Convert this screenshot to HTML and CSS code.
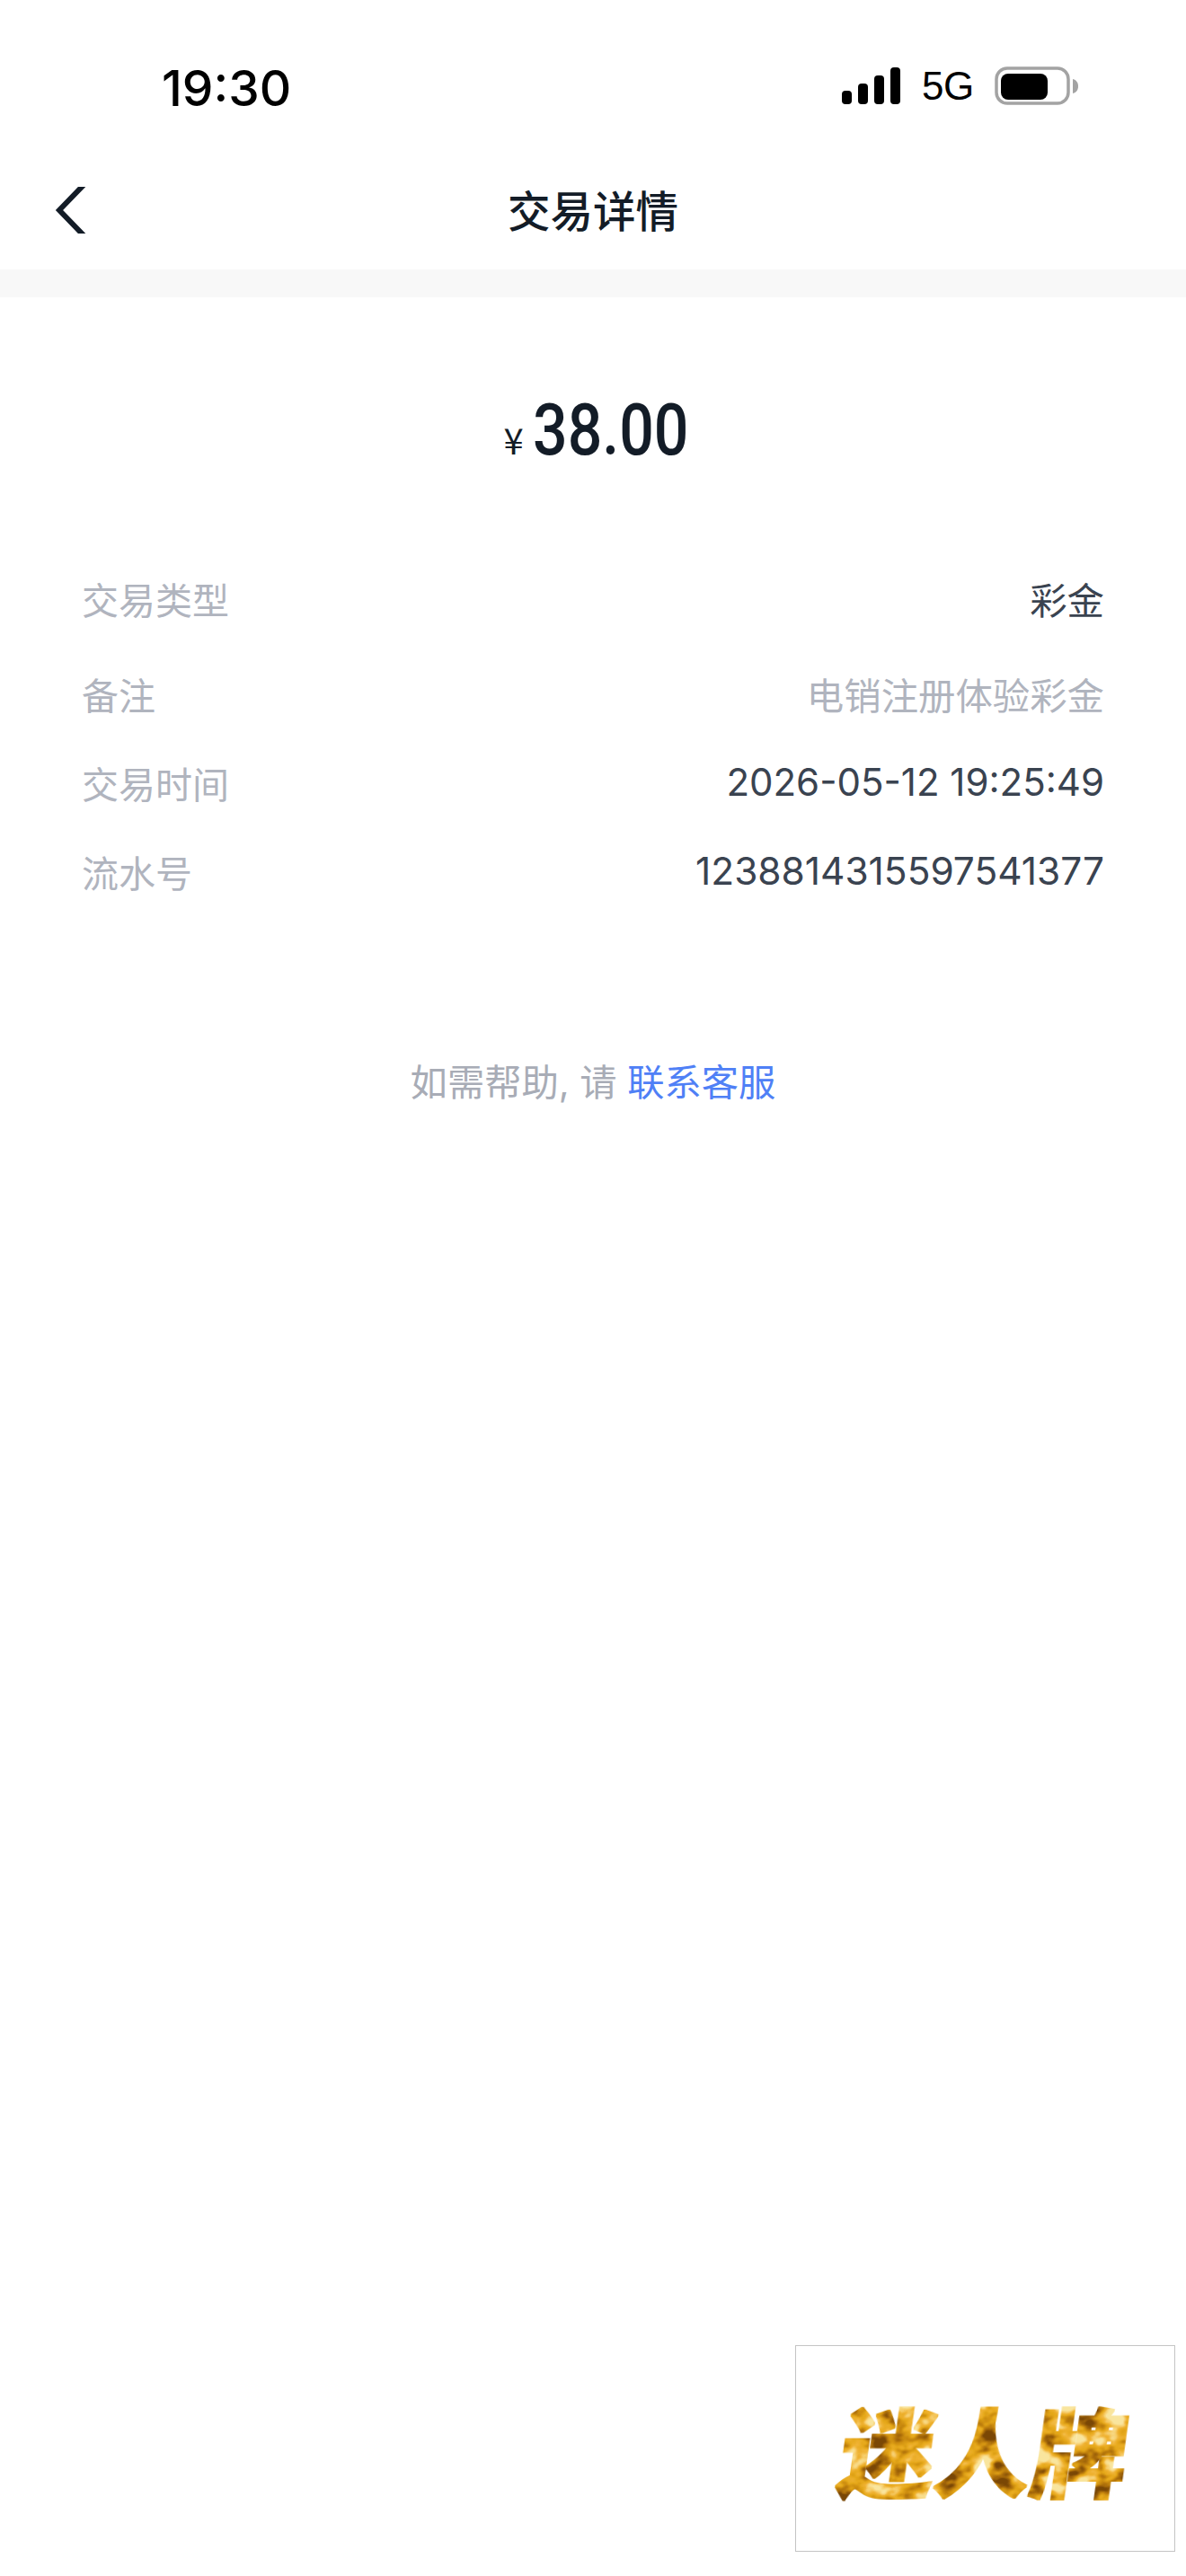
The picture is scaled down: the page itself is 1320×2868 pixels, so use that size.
FILE: index.html
```html
<!DOCTYPE html>
<html lang="zh-CN">
<head>
<meta charset="utf-8">
<title>交易详情</title>
<link rel="stylesheet" href="styles.css">
</head>
<body>
<div class="page">
  <header class="status">
    <span class="time">19:30</span>
    <div class="status-right">
      <svg class="signal" width="66" height="42" viewBox="0 0 66 42"><rect x="0" y="26" width="11" height="15" rx="4"/><rect x="18" y="18" width="11" height="23" rx="4"/><rect x="36" y="9" width="11" height="32" rx="4"/><rect x="54" y="0" width="11" height="41" rx="4"/></svg>
      <span class="net">5G</span>
      <svg class="battery" width="94" height="44" viewBox="0 0 94 44"><rect x="2" y="2" width="80" height="39" rx="12" fill="none" stroke="#a3a3a3" stroke-width="3.5"/><rect x="7" y="8" width="52" height="29" rx="8" fill="#000"/><path d="M87 14c4 1 6 4 6 8s-2 7-6 8z" fill="#a3a3a3"/></svg>
    </div>
  </header>
  <nav class="nav">
    <svg class="back" width="36" height="52" viewBox="0 0 36 52"><path d="M34-3 6 26l28 29" fill="none" stroke="#131c27" stroke-width="6"/></svg>
    <h1 class="title">交易详情</h1>
  </nav>
  <div class="band"></div>
  <main class="main">
    <div class="amount"><span class="yen">¥</span><span class="num">38.00</span></div>
    <dl class="rows">
      <div class="row r1"><dt>交易类型</dt><dd>彩金</dd></div>
      <div class="row r2"><dt>备注</dt><dd class="muted">电销注册体验彩金</dd></div>
      <div class="row r3"><dt>交易时间</dt><dd class="digits time-val">2026-05-12 19:25:49</dd></div>
      <div class="row r4"><dt>流水号</dt><dd class="digits">1238814315597541377</dd></div>
    </dl>
    <p class="help">如需帮助, 请 <a class="link">联系客服</a></p>
  </main>
  <div class="logo"><span class="logo-text">迷人牌</span></div>
  <svg class="defs" width="0" height="0" aria-hidden="true">
    <filter id="gold" x="-5%" y="-5%" width="110%" height="110%" color-interpolation-filters="sRGB">
      <feMorphology in="SourceAlpha" operator="dilate" radius="1.2" result="fat"/>
      <feTurbulence type="fractalNoise" baseFrequency="0.035 0.05" numOctaves="3" seed="7"/>
      <feColorMatrix type="matrix" values="0 0 0 0 0  0 0 0 0 0  0 0 0 0 0  1.6 1.6 0 0 -1.1"/>
      <feColorMatrix type="matrix" values="0 0 0 1 0  0 0 0 1 0  0 0 0 1 0  0 0 0 0 1"/>
      <feComponentTransfer>
        <feFuncR type="table" tableValues="0.48 0.66 0.80 0.90 0.94 0.97 0.98"/>
        <feFuncG type="table" tableValues="0.28 0.42 0.55 0.66 0.70 0.82 0.90"/>
        <feFuncB type="table" tableValues="0.02 0.04 0.06 0.10 0.20 0.45 0.62"/>
      </feComponentTransfer>
      <feComposite in2="fat" operator="in"/>
    </filter>
  </svg>
</div>
</body>
</html>
```
FILE: styles.css
```css
* { box-sizing: border-box; }
html, body { margin: 0; padding: 0; background: #fff; }
.page {
  position: relative;
  width: 1320px;
  height: 2868px;
  overflow: hidden;
  font-family: Inter, "Noto Sans CJK SC", sans-serif;
}
.defs { position: absolute; }
.status {
  height: 172px;
  padding: 66px 0 0 180px;
  display: flex;
  justify-content: space-between;
  align-items: flex-start;
}
.time {
  font: 500 55px/64px Inter, sans-serif;
  color: #000;
}
.status-right {
  display: flex;
  align-items: center;
  width: 383px;
  padding: 8px 0 0 0;
}
.net {
  font: 400 44px/44px "Liberation Sans", sans-serif;
  margin-left: 23px;
  width: 56px;
  letter-spacing: -.5px;
}
.battery { margin-left: 25px; }
.nav {
  position: relative;
  height: 128px;
  display: flex;
  justify-content: center;
  align-items: center;
}
.back { position: absolute; left: 60px; top: 36px; }
.title {
  margin: -6px 0 0;
  font: 500 47.5px/64px "Noto Sans CJK SC", sans-serif;
  color: #131c27;
}
.band { height: 31px; background: #f8f8f8; }
.main { padding: 0 91px; }
.amount {
  display: flex;
  justify-content: center;
  align-items: baseline;
  height: 96px;
  margin-top: 100px;
  padding-left: 3px;
  color: #131c27;
}
.yen { font: 400 40px/96px "Noto Sans CJK SC", sans-serif; margin-right: 10px; }
.num {
  display: inline-block;
  width: 170px;
  font: 500 80px/96px Roboto, sans-serif;
  white-space: nowrap;
  transform: scaleX(.85);
  transform-origin: left center;
}
.rows { margin: 0; padding-top: 108px; }
.row { display: flex; justify-content: space-between; align-items: center; height: 62px; }
.r2 { margin-top: 44px; }
.r3 { margin-top: 37px; }
.r4 { margin-top: 37px; }
dt { font: 400 41px/62px "Noto Sans CJK SC", sans-serif; color: #b0b4be; }
dd { margin: 0; font: 400 41.4px/62px "Noto Sans CJK SC", sans-serif; color: #3a4350; }
dd.muted { color: #b0b4be; }
dd.digits { font: 400 42.4px/62px Inter, sans-serif; }
dd.time-val { font-size: 42px; }
.help {
  margin: 173px 0 0;
  text-align: center;
  font: 400 41.3px/62px Inter, "Noto Sans CJK SC", sans-serif;
  color: #a8acb6;
}
.link { color: #4f80f6; }
.logo {
  position: absolute;
  left: 885px;
  top: 2611px;
  width: 423px;
  height: 230px;
  border: 1px solid #c4c4c4;
  display: flex;
  align-items: center;
  justify-content: center;
}
.logo-text {
  font: 900 107px/120px "Noto Sans CJK SC", sans-serif;
  transform: skewX(-8deg);
  color: #000;
  filter: url(#gold);
}
```
